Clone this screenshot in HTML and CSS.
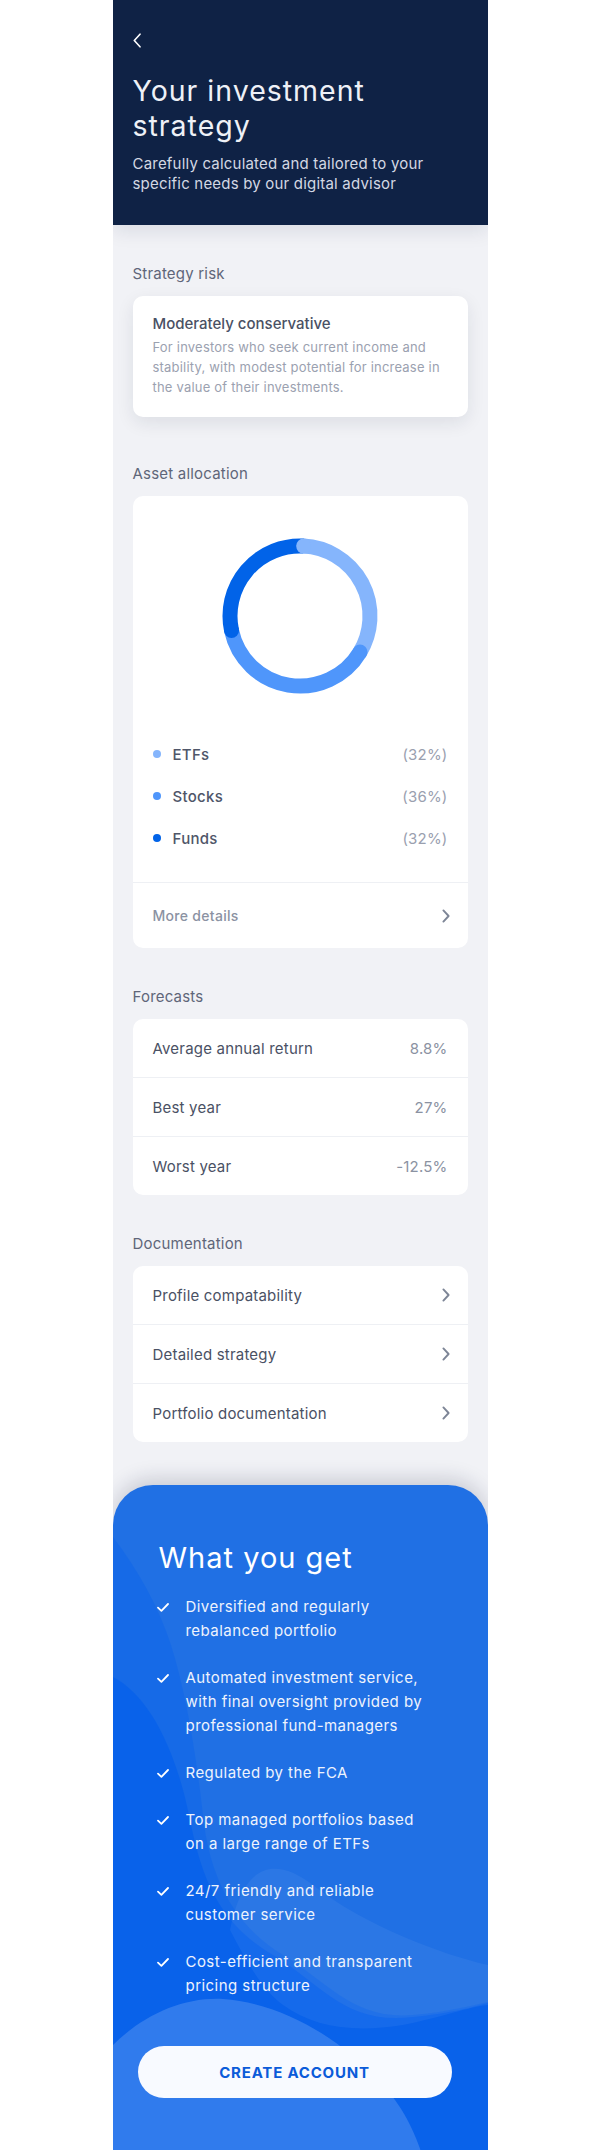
FILE: index.html
```html
<!DOCTYPE html>
<html lang="en">
<head>
<meta charset="utf-8">
<title>Your investment strategy</title>
<link rel="stylesheet" href="styles.css">
</head>
<body>
<div class="phone">
  <header class="hero">
    <a class="back" href="#" aria-label="Back">
      <svg width="8" height="15" viewBox="0 0 8 15"><path d="M7 1.2 L1.3 7.5 L7 13.8" fill="none" stroke="#ffffff" stroke-width="1.6" stroke-linecap="round" stroke-linejoin="round"/></svg>
    </a>
    <h1 class="hero-title">Your investment strategy</h1>
    <p class="hero-sub">Carefully calculated and tailored to your specific needs by our digital advisor</p>
  </header>

  <main class="content">
    <section class="group group-risk">
      <h2 class="group-title">Strategy risk</h2>
      <div class="card risk-card">
        <h3 class="risk-name">Moderately conservative</h3>
        <p class="risk-desc">For investors who seek current income and stability, with modest potential for increase in the value of their investments.</p>
      </div>
    </section>

    <section class="group">
      <h2 class="group-title">Asset allocation</h2>
      <div class="card alloc-card">
        <div class="donut-wrap">
          <svg class="donut" width="160" height="160" viewBox="0 0 160 160">
            <path d="M83.66 10.10 A70 70 0 0 1 140.00 116.05" fill="none" stroke="#85b5fc" stroke-width="15"/>
            <path d="M140.00 116.05 A70 70 0 0 1 11.53 94.55" fill="none" stroke="#4f96fb" stroke-width="15"/>
            <path d="M11.53 94.55 A70 70 0 0 1 83.66 10.10" fill="none" stroke="#0163e8" stroke-width="15"/>
            <circle cx="83.66" cy="10.10" r="7.5" fill="#85b5fc"/>
            <circle cx="140.00" cy="116.05" r="7.5" fill="#4f96fb"/>
            <circle cx="11.53" cy="94.55" r="7.5" fill="#0163e8"/>
          </svg>
        </div>
        <ul class="legend">
          <li class="legend-row"><span class="dot dot-etf"></span><span class="legend-label">ETFs</span><span class="legend-pct">(32%)</span></li>
          <li class="legend-row"><span class="dot dot-stock"></span><span class="legend-label">Stocks</span><span class="legend-pct">(36%)</span></li>
          <li class="legend-row"><span class="dot dot-fund"></span><span class="legend-label">Funds</span><span class="legend-pct">(32%)</span></li>
        </ul>
        <a class="more-row" href="#">
          <span>More details</span>
          <svg class="chev" width="8" height="14" viewBox="0 0 8 14"><path d="M1.4 1.4 L6.6 7 L1.4 12.6" fill="none" stroke="#7d8596" stroke-width="1.9" stroke-linecap="round" stroke-linejoin="round"/></svg>
        </a>
      </div>
    </section>

    <section class="group">
      <h2 class="group-title">Forecasts</h2>
      <div class="card list-card">
        <div class="list-row"><span>Average annual return</span><span class="list-val">8.8%</span></div>
        <div class="list-row"><span>Best year</span><span class="list-val">27%</span></div>
        <div class="list-row"><span>Worst year</span><span class="list-val">-12.5%</span></div>
      </div>
    </section>

    <section class="group">
      <h2 class="group-title">Documentation</h2>
      <div class="card list-card">
        <a class="list-row" href="#"><span>Profile compatability</span><svg class="chev" width="8" height="14" viewBox="0 0 8 14"><path d="M1.4 1.4 L6.6 7 L1.4 12.6" fill="none" stroke="#7d8596" stroke-width="1.9" stroke-linecap="round" stroke-linejoin="round"/></svg></a>
        <a class="list-row" href="#"><span>Detailed strategy</span><svg class="chev" width="8" height="14" viewBox="0 0 8 14"><path d="M1.4 1.4 L6.6 7 L1.4 12.6" fill="none" stroke="#7d8596" stroke-width="1.9" stroke-linecap="round" stroke-linejoin="round"/></svg></a>
        <a class="list-row" href="#"><span>Portfolio documentation</span><svg class="chev" width="8" height="14" viewBox="0 0 8 14"><path d="M1.4 1.4 L6.6 7 L1.4 12.6" fill="none" stroke="#7d8596" stroke-width="1.9" stroke-linecap="round" stroke-linejoin="round"/></svg></a>
      </div>
    </section>
  </main>

  <section class="benefits">
    <svg class="waves" width="375" height="700" viewBox="0 0 375 700" preserveAspectRatio="none" aria-hidden="true">
      <path d="M0 52 C25 85 45 120 58 160 C72 205 82 260 90 330 C96 390 120 440 170 470 C215 497 240 535 300 530 C335 527 360 520 375 517 L375 700 L0 700 Z" fill="#0b63ea" opacity="0.45"/>
      <path d="M0 192 C35 210 62 262 76 330 C88 392 105 438 160 470 C210 500 232 540 300 532 C340 528 360 522 375 518 L375 700 L0 700 Z" fill="#0560eb" opacity="0.75"/>
      <path d="M117 445 C135 480 150 505 170 520 C200 542 240 548 290 540 C330 532 355 522 375 520 L375 480 C330 470 250 440 200 400 C160 370 130 380 117 445 Z" fill="#ffffff" opacity="0.05"/>
      <path d="M0 560 C30 530 70 512 110 514 C170 518 230 555 270 600 C292 625 305 650 318 700 L0 700 Z" fill="#ffffff" opacity="0.16"/>
    </svg>
    <h2 class="benefits-title">What you get</h2>
    <ul class="benefit-list">
      <li class="benefit"><svg class="check" width="12" height="24" viewBox="0 0 12 24"><path d="M1 12.6 L4.4 15.8 L11 9" fill="none" stroke="#ffffff" stroke-width="1.8" stroke-linecap="round" stroke-linejoin="round"/></svg><span class="benefit-text">Diversified and regularly rebalanced portfolio</span></li>
      <li class="benefit"><svg class="check" width="12" height="24" viewBox="0 0 12 24"><path d="M1 12.6 L4.4 15.8 L11 9" fill="none" stroke="#ffffff" stroke-width="1.8" stroke-linecap="round" stroke-linejoin="round"/></svg><span class="benefit-text">Automated investment service, with final oversight provided by professional fund-managers</span></li>
      <li class="benefit"><svg class="check" width="12" height="24" viewBox="0 0 12 24"><path d="M1 12.6 L4.4 15.8 L11 9" fill="none" stroke="#ffffff" stroke-width="1.8" stroke-linecap="round" stroke-linejoin="round"/></svg><span class="benefit-text">Regulated by the FCA</span></li>
      <li class="benefit"><svg class="check" width="12" height="24" viewBox="0 0 12 24"><path d="M1 12.6 L4.4 15.8 L11 9" fill="none" stroke="#ffffff" stroke-width="1.8" stroke-linecap="round" stroke-linejoin="round"/></svg><span class="benefit-text">Top managed portfolios based on a large range of ETFs</span></li>
      <li class="benefit"><svg class="check" width="12" height="24" viewBox="0 0 12 24"><path d="M1 12.6 L4.4 15.8 L11 9" fill="none" stroke="#ffffff" stroke-width="1.8" stroke-linecap="round" stroke-linejoin="round"/></svg><span class="benefit-text">24/7 friendly and reliable customer service</span></li>
      <li class="benefit"><svg class="check" width="12" height="24" viewBox="0 0 12 24"><path d="M1 12.6 L4.4 15.8 L11 9" fill="none" stroke="#ffffff" stroke-width="1.8" stroke-linecap="round" stroke-linejoin="round"/></svg><span class="benefit-text">Cost-efficient and transparent pricing structure</span></li>
    </ul>
    <button class="cta" type="button">CREATE ACCOUNT</button>
  </section>
</div>
</body>
</html>
```

FILE: styles.css
```css
* { box-sizing: border-box; }

body {
  margin: 0;
  background: #ffffff;
  font-family: "Inter", "Noto Sans", "Liberation Sans", sans-serif;
  -webkit-font-smoothing: antialiased;
}

a { text-decoration: none; color: inherit; }

.phone {
  width: 375px;
  margin: 0 auto;
  background: #f1f2f6;
  overflow: hidden;
}

/* Header */
.hero {
  position: relative;
  z-index: 2;
  background: #0f2245;
  padding: 33px 20px 31px;
  box-shadow: 0 6px 18px rgba(15, 34, 69, 0.10);
}

.back {
  display: block;
  width: 8px;
  height: 15px;
}
.back svg { display: block; }

.hero-title {
  margin: 25px 0 0;
  max-width: 320px;
  font-size: 28.5px;
  line-height: 35px;
  font-weight: 400;
  color: #eef1f7;
  letter-spacing: 1px;
}

.hero-sub {
  margin: 11px 0 0;
  max-width: 318px;
  font-size: 15px;
  line-height: 20px;
  color: #d3d8e3;
  letter-spacing: 0.2px;
}

/* Content */
.content {
  display: flex;
  flex-direction: column;
  gap: 39px;
  padding: 39px 20px 43px;
}

.group-risk { margin-bottom: 8px; }

.group-title {
  margin: 0 0 12px;
  font-size: 15px;
  line-height: 20px;
  font-weight: 400;
  color: #5f6679;
  letter-spacing: 0.2px;
}

.card {
  background: #ffffff;
  border-radius: 10px;
}

.risk-card {
  padding: 18px 20px 20px;
  box-shadow: 0 6px 18px rgba(20, 30, 60, 0.09);
}

.risk-name {
  margin: 0 0 3px;
  font-size: 15px;
  line-height: 20px;
  font-weight: 500;
  color: #4a5164;
}

.risk-desc {
  margin: 0;
  font-size: 13px;
  line-height: 20px;
  color: #9ba1b0;
  letter-spacing: 0.2px;
}

/* Allocation */
.alloc-card { padding-top: 40px; }

.donut-wrap {
  display: flex;
  justify-content: center;
}
.donut { display: block; }

.legend {
  list-style: none;
  margin: 37px 0 0;
  padding: 0 20px 23px;
}

.legend-row {
  display: flex;
  align-items: center;
  height: 42px;
}

.dot {
  width: 8px;
  height: 8px;
  border-radius: 50%;
  flex: none;
}
.dot-etf { background: #85b5fc; }
.dot-stock { background: #4f96fb; }
.dot-fund { background: #0163e8; }

.legend-label {
  margin-left: 12px;
  font-size: 15px;
  font-weight: 500;
  color: #4f5669;
  letter-spacing: 0.3px;
}

.legend-pct {
  margin-left: auto;
  font-size: 15px;
  color: #9aa0af;
  letter-spacing: 0.2px;
}

.more-row {
  display: flex;
  align-items: center;
  justify-content: space-between;
  height: 66px;
  padding: 0 18px 0 20px;
  border-top: 1px solid #eef0f4;
  font-size: 14px;
  font-weight: 500;
  color: #8b92a2;
  letter-spacing: 0.3px;
}

.chev { display: block; flex: none; }

/* Lists */
.list-row {
  display: flex;
  align-items: center;
  justify-content: space-between;
  height: 58px;
  padding: 0 18px 0 20px;
  font-size: 15px;
  color: #4a5164;
  letter-spacing: 0.2px;
}
.list-row + .list-row {
  height: 59px;
  border-top: 1px solid #eef0f4;
}

.list-val {
  color: #8b92a2;
  padding-right: 2px;
}

/* Benefits */
.benefits {
  position: relative;
  z-index: 1;
  background: #2070e4;
  border-radius: 40px 40px 0 0;
  padding: 55px 36px 90px 25px;
  box-shadow: 0 -6px 20px rgba(20, 30, 60, 0.18);
  overflow: hidden;
}

.waves {
  position: absolute;
  left: 0;
  top: 0;
  z-index: 0;
  display: block;
}

.benefits-title,
.benefit-list,
.cta { position: relative; z-index: 1; }

.benefits-title {
  margin: 0 0 19px 21px;
  font-size: 29px;
  line-height: 36px;
  font-weight: 400;
  color: #ffffff;
  letter-spacing: 1px;
}

.benefit-list {
  list-style: none;
  margin: 0;
  padding: 0 0 0 19px;
  display: flex;
  flex-direction: column;
  gap: 23px;
}

.benefit {
  display: flex;
  align-items: flex-start;
}

.check {
  display: block;
  flex: none;
  margin-right: 17px;
}

.benefit-text {
  max-width: 240px;
  font-size: 15px;
  line-height: 24px;
  color: #eef3fd;
  letter-spacing: 0.45px;
}

.cta {
  display: block;
  margin-top: 48px;
  width: 314px;
  height: 52px;
  border: none;
  border-radius: 26px;
  background: #f8faff;
  font-family: inherit;
  font-size: 15px;
  font-weight: 700;
  letter-spacing: 0.8px;
  color: #0b5bd9;
}
```
